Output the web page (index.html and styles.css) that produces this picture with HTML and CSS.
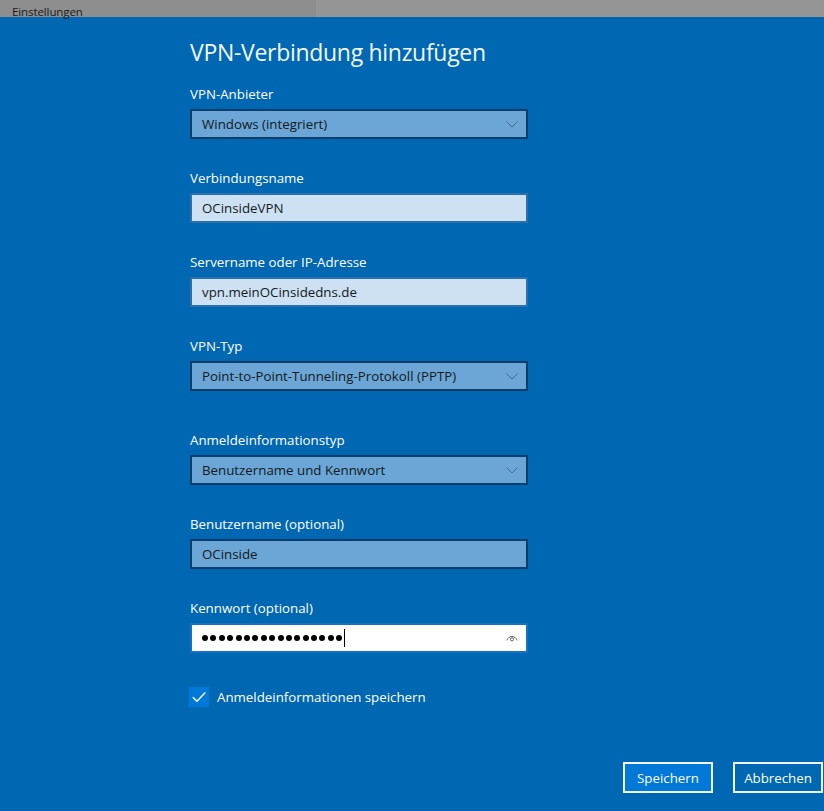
FILE: index.html
```html
<!DOCTYPE html>
<html lang="de">
<head>
<meta charset="utf-8">
<title>VPN-Verbindung hinzufügen</title>
<link rel="stylesheet" href="styles.css">
</head>
<body>
<div class="titlebar">
  <div class="titlebar-left"><span class="app-name">Einstellungen</span></div>
  <div class="titlebar-right"></div>
</div>
<div class="panel">
  <div class="content">
    <h1 class="title">VPN-Verbindung hinzufügen</h1>

    <div class="field">
      <div class="label">VPN-Anbieter</div>
      <div class="box select">
        <span class="value">Windows (integriert)</span>
        <svg class="chevron" width="12" height="7" viewBox="0 0 12 7"><path d="M0.5 0.5 L6 6 L11.5 0.5" fill="none" stroke="#44688c" stroke-width="1"/></svg>
      </div>
    </div>

    <div class="field">
      <div class="label">Verbindungsname</div>
      <div class="box text-input"><span class="value">OCinsideVPN</span></div>
    </div>

    <div class="field">
      <div class="label">Servername oder IP-Adresse</div>
      <div class="box text-input"><span class="value">vpn.meinOCinsidedns.de</span></div>
    </div>

    <div class="field">
      <div class="label">VPN-Typ</div>
      <div class="box select">
        <span class="value">Point-to-Point-Tunneling-Protokoll (PPTP)</span>
        <svg class="chevron" width="12" height="7" viewBox="0 0 12 7"><path d="M0.5 0.5 L6 6 L11.5 0.5" fill="none" stroke="#44688c" stroke-width="1"/></svg>
      </div>
    </div>

    <div class="field field-spaced">
      <div class="label">Anmeldeinformationstyp</div>
      <div class="box select">
        <span class="value">Benutzername und Kennwort</span>
        <svg class="chevron" width="12" height="7" viewBox="0 0 12 7"><path d="M0.5 0.5 L6 6 L11.5 0.5" fill="none" stroke="#44688c" stroke-width="1"/></svg>
      </div>
    </div>

    <div class="field">
      <div class="label">Benutzername (optional)</div>
      <div class="box select"><span class="value">OCinside</span></div>
    </div>

    <div class="field">
      <div class="label">Kennwort (optional)</div>
      <div class="box password">
        <span class="dots">
          <i></i><i></i><i></i><i></i><i></i><i></i><i></i><i></i><i></i><i></i><i></i><i></i><i></i><i></i><i></i><i></i><i></i>
        </span>
        <span class="caret"></span>
        <svg class="eye" width="12" height="8" viewBox="0 0 12 8"><path d="M0.8 6.5 C2.5 1.2, 9.5 1.2, 11.2 6.5" fill="none" stroke="#555" stroke-width="0.9"/><circle cx="6" cy="5.3" r="1.6" fill="none" stroke="#555" stroke-width="0.9"/></svg>
      </div>
    </div>

    <label class="checkrow">
      <span class="checkbox"><svg width="20" height="20" viewBox="0 0 20 20"><path d="M3.8 10.2 L8 14.3 L16.3 5.6" fill="none" stroke="#fff" stroke-width="1.4"/></svg></span>
      <span class="check-label">Anmeldeinformationen speichern</span>
    </label>
  </div>

  <div class="footer">
    <button class="btn btn-primary">Speichern</button>
    <button class="btn btn-secondary">Abbrechen</button>
  </div>
</div>
</body>
</html>
```

FILE: styles.css
```css
html, body {
  margin: 0;
  padding: 0;
}
body {
  width: 824px;
  height: 811px;
  overflow: hidden;
  background: #0067b3;
  font-family: "Open Sans", "Noto Sans", "DejaVu Sans", sans-serif;
}
.titlebar {
  display: flex;
  height: 17px;
}
.titlebar-left {
  width: 316px;
  background: #8e8e8e;
}
.titlebar-right {
  flex: 1;
  background: #959595;
}
.app-name {
  display: block;
  padding-left: 12px;
  padding-top: 4px;
  font-size: 11.5px;
  line-height: 16px;
  color: #1a1a1a;
  letter-spacing: -0.1px;
}
.panel {
  height: 794px;
  background: #0067b3;
  display: flex;
  flex-direction: column;
}
.content {
  padding-left: 190px;
  width: 338px;
}
.title {
  margin: 0;
  padding-top: 19px;
  font-size: 23px;
  line-height: 32px;
  font-weight: 400;
  color: #f2f8ff;
  letter-spacing: -0.3px;
}
.field {
  margin-top: 16px;
}
.field + .field {
  margin-top: 29px;
}
.field.field-spaced {
  margin-top: 39px;
}
.label {
  font-size: 13.3px;
  line-height: 20px;
  color: #ffffff;
  margin-bottom: 5px;
}
.box {
  box-sizing: border-box;
  height: 30px;
  width: 338px;
  border: 2px solid;
  display: flex;
  align-items: center;
  padding: 0 8px 0 10px;
  font-size: 13.3px;
  color: #111a22;
}
.box .value {
  flex: 1;
  white-space: nowrap;
}
.select {
  background: #6ba6d6;
  border-color: #0b3d6c;
}
.text-input {
  background: #cde1f2;
  border-color: #2a6fae;
}
.password {
  background: #ffffff;
  border-color: #1571c4;
}
.dots {
  display: flex;
  gap: 2.4px;
}
.dots i {
  display: block;
  width: 6px;
  height: 6px;
  border-radius: 50%;
  background: #000;
}
.caret {
  width: 1px;
  height: 18px;
  background: #000;
  margin-left: 2px;
}
.eye {
  margin-left: auto;
}
.checkrow {
  display: flex;
  align-items: center;
  margin-top: 34px;
  margin-left: -1px;
}
.checkbox {
  width: 20px;
  height: 20px;
  background: #0078d7;
  display: block;
}
.checkbox svg {
  display: block;
}
.check-label {
  margin-left: 8px;
  font-size: 13.3px;
  color: #ffffff;
}
.footer {
  display: flex;
  justify-content: flex-end;
  gap: 20px;
  margin-top: 55px;
  padding-right: 1px;
}
.btn {
  box-sizing: border-box;
  width: 90px;
  height: 31px;
  border: 2px solid #f0f6fc;
  font-family: inherit;
  font-size: 13.3px;
  color: #ffffff;
  padding: 0;
  margin: 0;
}
.btn-primary {
  background: #0078d7;
}
.btn-secondary {
  background: #0067b3;
}
```
